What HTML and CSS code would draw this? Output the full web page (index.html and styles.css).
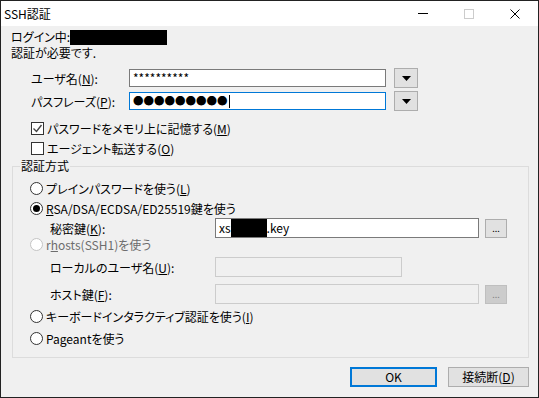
FILE: index.html
```html
<!DOCTYPE html>
<html lang="ja">
<head>
    <meta charset="UTF-8">
    <title>SSH認証</title>
    <link rel="stylesheet" href="styles.css">
</head>
<body>
    <div class="window">
        <div class="titlebar">
            <span class="title">SSH認証</span>
            <div class="caption">
                <span class="cap"><svg width="10" height="10"><path d="M0 4.5h10" stroke="#000" stroke-width="1"/></svg></span>
                <span class="cap"><svg width="10" height="10"><rect x="0.5" y="0.5" width="9" height="9" fill="none" stroke="#ccc"/></svg></span>
                <span class="cap"><svg width="10" height="10"><path d="M0.5 0.5l9 9M9.5 0.5l-9 9" stroke="#000" stroke-width="1"/></svg></span>
            </div>
        </div>

        <div class="content">
            <div class="line first">ログイン中:<span class="redact login"></span></div>
            <div class="line">認証が必要です.</div>

            <div class="field-row user-row">
                <span class="field-label">ユーザ名(<u>N</u>):</span>
                <div class="edit">**********</div>
                <span class="drop"><svg width="9" height="5"><path d="M0 0h9L4.5 5z"/></svg></span>
            </div>
            <div class="field-row pass-row">
                <span class="field-label">パスフレーズ(<u>P</u>):</span>
                <div class="edit focus"><span class="dots">●●●●●●●●●</span><span class="caret"></span></div>
                <span class="drop"><svg width="9" height="5"><path d="M0 0h9L4.5 5z"/></svg></span>
            </div>

            <div class="check-row first-check">
                <span class="checkbox"><svg width="11" height="11"><path d="M1.5 5.5l3 3 5-6.5" fill="none" stroke="#444" stroke-width="1.4"/></svg></span>
                <span>パスワードをメモリ上に記憶する(<u>M</u>)</span>
            </div>
            <div class="check-row">
                <span class="checkbox"></span>
                <span>エージェント転送する(<u>O</u>)</span>
            </div>

            <fieldset class="group">
                <legend>認証方式</legend>
                <div class="radio-row r-plain">
                    <span class="radio"></span>
                    <span>プレインパスワードを使う(<u>L</u>)</span>
                </div>
                <div class="radio-row r-rsa">
                    <span class="radio checked"></span>
                    <span><u>R</u>SA/DSA/ECDSA/ED25519鍵を使う</span>
                </div>
                <div class="sub-row key-row">
                    <span class="sub-label">秘密鍵(<u>K</u>):</span>
                    <div class="edit key">xs<span class="redact keyname"></span>.key</div>
                    <span class="browse">...</span>
                </div>
                <div class="radio-row r-rhosts disabled">
                    <span class="radio"></span>
                    <span>r<u>h</u>osts(SSH1)を使う</span>
                </div>
                <div class="sub-row local-row">
                    <span class="sub-label">ローカルのユーザ名(<u>U</u>):</span>
                    <div class="edit off short"></div>
                </div>
                <div class="sub-row host-row">
                    <span class="sub-label">ホスト鍵(<u>F</u>):</span>
                    <div class="edit off key"></div>
                    <span class="browse off">...</span>
                </div>
                <div class="radio-row r-kbd">
                    <span class="radio"></span>
                    <span>キーボードインタラクティブ認証を使う(<u>I</u>)</span>
                </div>
                <div class="radio-row r-pageant">
                    <span class="radio"></span>
                    <span>Pageantを使う</span>
                </div>
            </fieldset>

            <div class="buttons">
                <span class="btn default">OK</span>
                <span class="btn">接続断(<u>D</u>)</span>
            </div>
        </div>
    </div>
</body>
</html>
```

FILE: styles.css
```css
* {
    box-sizing: border-box;
}

body {
    margin: 0;
    background-color: #fff;
    font-family: "Noto Sans CJK JP", "Noto Sans", sans-serif;
    font-size: 12px;
    font-feature-settings: "palt";
    color: #000;
}

u {
    text-underline-offset: 1px;
}

.window {
    width: 539px;
    height: 398px;
    border: 1px solid #222;
    background-color: #f0f0f0;
}

.titlebar {
    height: 25px;
    background-color: #fff;
    display: flex;
    justify-content: space-between;
    align-items: center;
}

.title {
    padding-left: 3px;
    padding-top: 1px;
    line-height: 14px;
}

.caption {
    display: flex;
    align-self: stretch;
}

.cap {
    width: 46px;
    display: flex;
    align-items: center;
    justify-content: center;
}

.cap svg {
    display: block;
}

.content {
    padding-left: 10px;
}

.line {
    height: 16px;
    line-height: 16px;
    display: flex;
    align-items: center;
}

.line.first {
    margin-top: 3px;
}

.redact {
    display: inline-block;
    background-color: #000;
}

.login {
    width: 97px;
    height: 15px;
}

/* user / passphrase rows */
.field-row {
    display: flex;
    align-items: center;
    height: 20px;
    padding-left: 20px;
}

.user-row {
    margin-top: 7px;
}

.pass-row {
    margin-top: 3px;
}

.field-label {
    width: 98px;
}

.edit {
    height: 18px;
    border: 1px solid #7a7a7a;
    background-color: #fff;
    padding-left: 3px;
    display: flex;
    align-items: center;
    line-height: 14px;
}

.field-row .edit {
    width: 257px;
}

.edit.focus {
    border-color: #0078d7;
}

.dots {
    font-size: 10.5px;
    line-height: 12px;
}

.caret {
    width: 1px;
    height: 13px;
    background-color: #000;
    margin-left: 1px;
}

.drop {
    width: 24px;
    height: 20px;
    margin-left: 8px;
    background-color: #e1e1e1;
    border: 1px solid #adadad;
    display: flex;
    align-items: center;
    justify-content: center;
}

.drop svg {
    display: block;
}

/* checkboxes */
.check-row {
    display: flex;
    align-items: center;
    height: 20px;
    padding-left: 20px;
}

.first-check {
    margin-top: 7px;
}

.checkbox {
    width: 13px;
    height: 13px;
    border: 1px solid #333;
    background-color: #fff;
    margin-right: 3px;
    display: flex;
    align-items: center;
    justify-content: center;
}

.checkbox svg {
    display: block;
}

/* group box */
.group {
    margin: 2px 0 0 1px;
    width: 517px;
    height: 198px;
    padding: 0 0 0 17px;
    border: 1px solid #dcdcdc;
}

.group legend {
    padding: 0 1px;
    margin-left: -10px;
    line-height: 12px;
}

.radio-row {
    display: flex;
    align-items: center;
    height: 20px;
}

.r-plain {
    margin-top: 6px;
}

.r-rhosts {
    height: 12px;
}

.r-kbd {
    margin-top: 2px;
}

.r-pageant {
    margin-top: 2px;
}

.radio {
    width: 13px;
    height: 13px;
    border: 1px solid #333;
    border-radius: 50%;
    background-color: #fff;
    margin-right: 3px;
    display: flex;
    align-items: center;
    justify-content: center;
}

.radio.checked::after {
    content: "";
    width: 7px;
    height: 7px;
    border-radius: 50%;
    background-color: #000;
}

.disabled {
    color: #6d6d6d;
}

.disabled .radio {
    border-color: #c4c4c4;
}

.sub-row {
    display: flex;
    align-items: center;
    height: 20px;
    padding-left: 20px;
}

.local-row,
.host-row {
    margin-top: 7px;
}

.sub-label {
    width: 165px;
}

.sub-row .edit {
    height: 20px;
}

.edit.key {
    width: 264px;
}

.edit.short {
    width: 187px;
}

.edit.off {
    border-color: #ccc;
    background-color: #f0f0f0;
}

.keyname {
    width: 36px;
    height: 18px;
}

.browse {
    width: 22px;
    height: 19px;
    margin-left: 6px;
    background-color: #e1e1e1;
    border: 1px solid #adadad;
    font-size: 9px;
    line-height: 17px;
    text-align: center;
}

.browse.off {
    background-color: #ccc;
    border-color: #bfbfbf;
    color: #838383;
}

/* bottom buttons */
.buttons {
    display: flex;
    justify-content: flex-end;
    margin-top: 9px;
    padding-right: 9px;
}

.btn {
    height: 20px;
    background-color: #e1e1e1;
    border: 1px solid #adadad;
    text-align: center;
    line-height: 17px;
    width: 81px;
}

.btn.default {
    width: 87px;
    border: 2px solid #0078d7;
    line-height: 16px;
    margin-right: 11px;
}
```
